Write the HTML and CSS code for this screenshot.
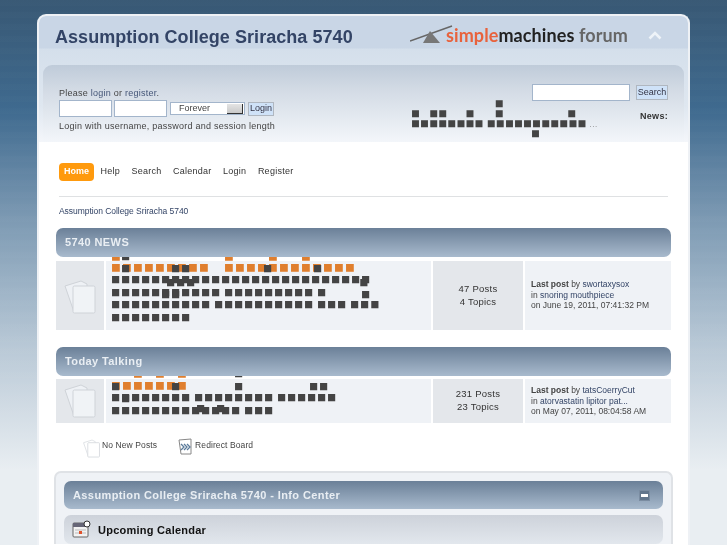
FILE: index.html
```html
<!DOCTYPE html>
<html lang="en">
<head>
    <meta charset="UTF-8">
    <meta name="viewport" content="width=device-width, initial-scale=1.0">
    <title>Assumption College Sriracha 5740 - Index</title>
    <link rel="stylesheet" href="styles.css">
</head>
<body>
    <div class="wrapper">
        <!-- header -->
        <div class="header">
            <div class="top-bar">
                <h1 class="forum-title">Assumption College Sriracha 5740</h1>
                <div class="logo">
                    <svg class="logo-mark" width="44" height="20" viewBox="0 0 44 20">
                        <path d="M0 16 L42 1" stroke="#666" stroke-width="1.6" fill="none"/>
                        <path d="M20 6 L30 18 L13 18 Z" fill="#777"/>
                    </svg>
                    <span class="logo-text"><span class="logo-simple">simple</span><span class="logo-machines">machines</span> <span class="logo-forum">forum</span></span>
                </div>
                <svg class="collapse" width="14" height="9" viewBox="0 0 14 9">
                    <path d="M1.5 7.5 L7 2 L12.5 7.5" stroke="#eef3f8" stroke-width="2.6" fill="none"/>
                </svg>
            </div>
            <div class="user-box">
                <div class="login">
                    <p class="login-line">Please <a href="#">login</a> or <a href="#">register</a>.</p>
                    <form class="login-form">
                        <input class="text-input" type="text">
                        <input class="text-input" type="password">
                        <div class="fake-select">Forever<span class="select-arrow"></span></div>
                        <button class="small-btn" type="button">Login</button>
                    </form>
                    <p class="login-line">Login with username, password and session length</p>
                </div>
                <div class="news-side">
                    <div class="search-form">
                        <input class="search-input" type="text">
                        <button class="small-btn search-btn" type="button">Search</button>
                    </div>
                    <div class="news">
                        <div class="tofu tofu-news"><div class="news-row">         <i class="nudge-2"></i>■</div><div class="news-row">■ ■■  ■  <i class="nudge-2"></i>■       ■</div><div class="news-row news-words">■■■■■■■■ ■■■■■■■■■■■<span class="more">...</span></div><div class="news-row">             <i class="nudge-2"></i>■</div></div>
                        <strong class="news-label">News:</strong>
                    </div>
                </div>
            </div>
        </div>

        <div class="content">
            <ul class="menu">
                <li class="active"><a href="#">Home</a></li>
                <li><a href="#">Help</a></li>
                <li><a href="#">Search</a></li>
                <li><a href="#">Calendar</a></li>
                <li><a href="#">Login</a></li>
                <li><a href="#">Register</a></li>
            </ul>
            <div class="crumbs"><a href="#">Assumption College Sriracha 5740</a></div>

            <!-- boards -->
            <div class="category">
                <h3 class="cat-bar">5740 NEWS</h3>
                <div class="board board-tall">
                    <div class="board-icon">
                        <svg width="32" height="36" viewBox="0 0 32 36"><path d="M1 8 L17 3 L23 6 L23 30 L10 34 Z" fill="#eef1f5" stroke="#cfd3d8"/><rect x="9" y="8" width="22" height="27" rx="1.5" fill="#f0f3f6" stroke="#cfd3d8"/></svg>
                    </div>
                    <div class="board-main">
                        <div class="title-row">■■■■■■■■■ ■■■■■■■■■■■■</div>
                        <div class="tofu">■■■■■■■■■■■■■■■■■■■■■■■■■■</div>
                        <div class="tofu">■■■■■■■■■■■ ■■■■■■■■■ ■</div>
                        <div class="tofu">■■■■■■■■■■ ■■■■■■■■■■ ■■■ ■■■</div>
                        <div class="tofu">■■■■■■■■</div>
                        <div class="over over-orange top-a">■         <i class="nudge-3"></i>■   ■  ■</div>
                        <div class="over top-a"> ■</div>
                        <div class="over top-b"> ■    ■■       <i class="nudge-2"></i>■    ■</div>
                        <div class="over top-c">     <i class="nudge-5"></i>■■■                <i class="nudge-3"></i>■</div>
                        <div class="over top-d">     ■■                  ■</div>
                    </div>
                    <div class="board-stats">47 Posts<br>4 Topics</div>
                    <div class="board-last"><strong>Last post</strong> by <a href="#">swortaxysox</a><br>in <a href="#">snoring mouthpiece</a><br>on June 19, 2011, 07:41:32 PM</div>
                </div>
            </div>

            <div class="category">
                <h3 class="cat-bar">Today Talking</h3>
                <div class="board board-short">
                    <div class="board-icon">
                        <svg width="32" height="36" viewBox="0 0 32 36"><path d="M1 8 L17 3 L23 6 L23 30 L10 34 Z" fill="#eef1f5" stroke="#cfd3d8"/><rect x="9" y="8" width="22" height="27" rx="1.5" fill="#f0f3f6" stroke="#cfd3d8"/></svg>
                    </div>
                    <div class="board-main">
                        <div class="title-row">■■■■■■■</div>
                        <div class="tofu">■■■■■■■■ ■■■■■■■■ ■■■■■■</div>
                        <div class="tofu">■■■■■■■■■■■■■ ■■■</div>
                        <div class="over over-orange top-e">  ■ ■ ■</div>
                        <div class="over top-e">            <i class="nudge-3"></i>■</div>
                        <div class="over top-f">■     ■     <i class="nudge-3"></i>■      <i class="nudge-5"></i>■■</div>
                        <div class="over top-g"> ■</div>
                        <div class="over top-h">        <i class="nudge-5"></i>■ ■</div>
                    </div>
                    <div class="board-stats">231 Posts<br>23 Topics</div>
                    <div class="board-last"><strong>Last post</strong> by <a href="#">tatsCoerryCut</a><br>in <a href="#">atorvastatin lipitor pat...</a><br>on May 07, 2011, 08:04:58 AM</div>
                </div>
            </div>

            <div class="legend">
                <span class="legend-item">
                    <svg width="17" height="20" viewBox="0 0 32 36"><path d="M1 8 L17 3 L23 6 L23 30 L10 34 Z" fill="#fff" stroke="#dcdfe3" stroke-width="1.6"/><rect x="9" y="8" width="22" height="27" rx="1.5" fill="#fff" stroke="#d6d9de" stroke-width="1.6"/></svg>
                    No New Posts
                </span>
                <span class="legend-item">
                    <svg width="15" height="17" viewBox="0 0 15 17"><path d="M1 2 L13 1 L13 16 L3 16 Z" fill="#fff" stroke="#888"/><path d="M3 6 L6 9 L3 12 M6 6 L9 9 L6 12 M9 6 L12 9 L9 12" stroke="#5b7b9b" stroke-width="1.3" fill="none"/></svg>
                    Redirect Board
                </span>
            </div>

            <!-- info center -->
            <div class="info-center">
                <div class="info-bar">
                    <h3>Assumption College Sriracha 5740 - Info Center</h3>
                    <span class="toggle"></span>
                </div>
                <div class="info-sub">
                    <svg width="19" height="19" viewBox="0 0 19 19">
                        <rect x="1" y="3" width="15" height="14" rx="1" fill="#f2f2f2" stroke="#666"/>
                        <rect x="1" y="3" width="15" height="4" fill="#667"/>
                        <path d="M3 10h11M3 13h11" stroke="#bbb"/>
                        <rect x="7" y="11" width="3" height="3" fill="#e0512b"/>
                        <circle cx="15" cy="4" r="3" fill="#fff" stroke="#333"/>
                    </svg>
                    <h4>Upcoming Calendar</h4>
                </div>
            </div>
        </div>
    </div>
</body>
</html>
```

FILE: styles.css
```css
html, body {
    height: 100%;
    overflow: hidden;
}

body {
    margin: 0;
    background:
        repeating-linear-gradient(to bottom, rgba(255, 255, 255, 0.012) 0, rgba(255, 255, 255, 0.012) 6px, transparent 6px, transparent 12px),
        linear-gradient(to bottom, #385874 0, #3f6a8f 110px, #7d9ab3 220px, #b8c8d6 345px, #e9eef2 470px);
    font-family: "Liberation Sans", Arial, sans-serif;
    font-size: 9px;
    letter-spacing: 0.25px;
    color: #444;
}

a {
    color: #334466;
    text-decoration: none;
}

p, h1, h3, h4, ul {
    margin: 0;
    padding: 0;
}

.wrapper {
    width: 649px;
    margin: 14px auto 0;
    background: #fff;
    border: 2px solid #eef1f5;
    border-bottom: none;
    border-radius: 9px 9px 0 0;
    height: 700px;
    filter: blur(0.35px);
}

/* header */
.header {
    background: linear-gradient(to bottom, #c9d6e6 0, #c9d6e6 32px, #d4dfeb 33px, #dfe7f0 90px, #f4f6fa 126px);
    border-radius: 7px 7px 0 0;
    height: 126px;
    padding: 0 4px;
    box-sizing: border-box;
}

.top-bar {
    display: flex;
    align-items: center;
    height: 49px;
    box-sizing: border-box;
    padding: 0 0 8px 12px;
}

.forum-title {
    flex: 1;
    font-size: 18px;
    line-height: 30px;
    letter-spacing: 0.05px;
    color: #334466;
}

.logo {
    display: flex;
    align-items: flex-end;
    margin-top: -3px;
}

.logo-mark {
    margin-right: -8px;
}

.logo-text {
    font-family: Lato, sans-serif;
    font-size: 18px;
    line-height: 20px;
    letter-spacing: 0.1px;
    font-weight: 700;
}

.logo-simple {
    color: #e8623c;
}

.logo-machines {
    color: #222;
}

.logo-forum {
    color: #666;
}

.collapse {
    margin: -2px 22px 0 20px;
}

.user-box {
    display: flex;
    justify-content: space-between;
    height: 77px;
    padding: 0 16px 0 16px;
    border-radius: 9px 9px 0 0;
    background: linear-gradient(to bottom, #bfcbd9 0, #d3dbe5 25px, #f3f6fa 77px);
}

.login {
    padding-top: 22px;
}

.login-line {
    line-height: 12px;
}

.login-line a {
    color: #445577;
}

.login-form {
    display: flex;
    align-items: center;
    gap: 2px;
    margin: 1px 0 3px;
}

.text-input {
    width: 53px;
    height: 17px;
    padding: 0;
    box-sizing: border-box;
    border: 1px solid #a3b5cb;
    background: #fff;
}

.fake-select {
    position: relative;
    width: 75px;
    height: 13px;
    margin-left: 1px;
    box-sizing: border-box;
    border: 1px solid #a3b5cb;
    background: #fff;
    padding-left: 8px;
    font-size: 9px;
    letter-spacing: 0;
    line-height: 11px;
}

.select-arrow {
    position: absolute;
    right: 1px;
    top: 1px;
    width: 15px;
    height: 9px;
    background: linear-gradient(to bottom, #e4e4e4, #c9c9c9);
    border-right: 1px solid #333;
    border-bottom: 1px solid #333;
}

.small-btn {
    height: 14px;
    padding: 0 1px;
    margin-left: 1px;
    border: 1px solid #b0b7c0;
    background: #cfe2f8;
    font-family: "Liberation Sans", Arial, sans-serif;
    font-size: 9px;
    line-height: 11px;
    color: #334;
}

.search-btn {
    height: 15px;
    padding: 0;
    width: 32px;
}

.news-side {
    width: 256px;
    padding-top: 19px;
}

.search-form {
    display: flex;
    justify-content: flex-end;
    align-items: center;
    gap: 5px;
}

.search-input {
    width: 98px;
    height: 17px;
    padding: 0;
    box-sizing: border-box;
    border: 1px solid #a3b5cb;
    background: #fff;
}

.news {
    display: flex;
    justify-content: space-between;
    margin-top: -3px;
}

.news-label {
    margin-top: 13px;
    font-size: 9px;
    letter-spacing: 0.3px;
    color: #333;
}

/* square runs - the board titles came through as missing glyphs */
.tofu, .over {
    font-family: "DejaVu Sans Mono", monospace;
    font-size: 12px;
    letter-spacing: 2.78px;
    word-spacing: -7px;
    white-space: pre;
    color: #444;
    line-height: 12.7px;
}

.tofu-news {
    font-size: 11.6px;
    letter-spacing: 2.1px;
    line-height: 10px;
}

.news-row {
    height: 10px;
    word-spacing: 0;
}

.news-words {
    word-spacing: -6px;
}

.more {
    font-family: "Liberation Sans", Arial, sans-serif;
    font-size: 8px;
    letter-spacing: 0.5px;
    color: #777;
    margin-left: 2px;
}

.nudge-2, .nudge-3, .nudge-5 {
    display: inline-block;
    height: 1px;
}

.nudge-2 { width: 2px; }
.nudge-3 { width: 3px; }
.nudge-5 { width: 5px; }

/* content */
.content {
    padding: 21px 17px 0 17px;
}

.menu {
    list-style: none;
    display: flex;
    align-items: center;
    gap: 1.5px;
    margin-left: 3px;
    height: 18px;
    font-size: 9px;
    padding-bottom: 15px;
    border-bottom: 1px solid #dfe1e3;
    margin-right: 3px;
}

.menu li a {
    display: block;
    padding: 0 5px 1px;
    line-height: 17px;
    color: #333;
}

.menu li.active a {
    background: #ff9a0d;
    border-radius: 4px;
    color: #fff;
    font-weight: bold;
    letter-spacing: 0;
}

.crumbs {
    margin: 9px 0 11px 3px;
    font-size: 8.5px;
    letter-spacing: -0.05px;
    line-height: 11px;
}

.category {
    margin-bottom: 17px;
}

.cat-bar, .info-bar {
    position: relative;
    z-index: 2;
    height: 29px;
    border-radius: 7px;
    background: linear-gradient(to bottom, #6b8098, #a8bacd);
    font-size: 11px;
    letter-spacing: 0.4px;
    line-height: 28px;
    color: #e9eef3;
    padding-left: 9px;
}

.board {
    display: grid;
    grid-template-columns: 48px 325px 90px 146px;
    gap: 2px;
    margin-top: 4px;
}

.board-tall {
    height: 69px;
}

.board-short {
    height: 44px;
    margin-top: 3px;
}

.board-icon, .board-stats {
    background: #e4e7eb;
}

.board-main, .board-last {
    background: #eff2f6;
}

.board-icon {
    display: flex;
    align-items: center;
    justify-content: center;
}

.board-short .board-icon svg {
    margin-top: -3px;
}

.board-main {
    position: relative;
    padding: 0 0 0 6px;
}

.board-stats {
    display: flex;
    align-items: center;
    justify-content: center;
    text-align: center;
    font-size: 9.5px;
    line-height: 13px;
    padding-bottom: 2px;
    box-sizing: border-box;
    color: #333;
}

.board-last {
    padding: 18px 0 0 6px;
    font-size: 8.5px;
    letter-spacing: 0;
    line-height: 10.5px;
}

.board-short .board-last {
    padding-top: 6px;
}

.title-row, .over-orange {
    font-family: "DejaVu Sans Mono", monospace;
    font-size: 13px;
    letter-spacing: 3.17px;
    white-space: pre;
    color: #e07f2e;
}

.title-row {
    word-spacing: 3px;
    line-height: 12px;
}

.over {
    position: absolute;
    left: 6px;
    word-spacing: 0;
}

.top-a { top: -11px; }
.top-b { top: 1px; }
.top-c { top: 15px; }
.top-d { top: 27px; }
.top-e { top: -12px; }
.top-f { top: 1px; }
.top-g { top: 13px; }
.top-h { top: 23px; }

.legend {
    display: flex;
    gap: 21px;
    margin: -2px 0 12px 27px;
    height: 21px;
    font-size: 8.5px;
    letter-spacing: 0.1px;
}

.legend-item {
    display: flex;
    align-items: flex-start;
    gap: 2px;
    line-height: 15px;
}

/* info center */
.info-center {
    margin: 0 -2px;
    padding: 8px 8px 0;
    border: 2px solid #dfe2e6;
    border-bottom: none;
    border-radius: 7px 7px 0 0;
    background: #eff2f6;
}

.info-bar {
    display: flex;
    align-items: center;
    justify-content: space-between;
    height: 28px;
    padding: 0 13px 0 9px;
}

.info-bar h3 {
    font-size: 11px;
}

.toggle {
    position: relative;
    width: 11px;
    height: 11px;
    background: #63768c;
    border: 1px solid #7a8ca1;
    box-sizing: border-box;
}

.toggle::after {
    content: "";
    position: absolute;
    left: 1px;
    right: 1px;
    top: 3px;
    height: 3px;
    background: #fff;
}

.info-sub {
    display: flex;
    align-items: center;
    gap: 7px;
    height: 29px;
    margin-top: 6px;
    padding-left: 8px;
    border-radius: 7px;
    background: linear-gradient(to bottom, #cdd2da, #e2e7ed);
}

.info-sub h4 {
    font-size: 11px;
    letter-spacing: 0.25px;
    color: #111;
}
```
